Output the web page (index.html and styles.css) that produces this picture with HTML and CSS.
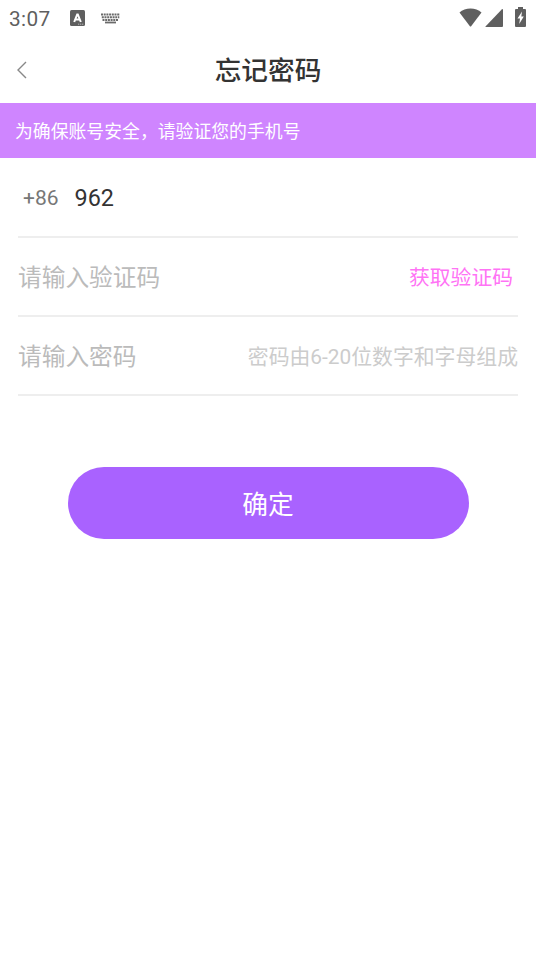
FILE: index.html
```html
<!DOCTYPE html>
<html lang="zh-CN">
<head>
<meta charset="utf-8">
<title>忘记密码</title>
<link rel="stylesheet" href="styles.css">
</head>
<body>
<div class="status">
  <span class="time">3:07</span>
  <svg class="ico-a" width="15" height="16" viewBox="0 0 15 16"><rect width="15" height="16" rx="1.500" fill="#5f5f5f"/><path d="M4.200 12 7.200 4.500h.6l3 7.500M5.500 9.500h4" fill="none" stroke="#fff" stroke-width="2"/><path d="M8 14.200h5.500" stroke="#ccc" stroke-width=".8" stroke-dasharray="1.300 .7"/></svg>
  <svg class="ico-kb" width="19" height="11" viewBox="0 0 19 11"><path d="M0 1.500h19M.8 4.200h17.500M1.500 6.900h16" stroke="#6a6a6a" stroke-width="2" stroke-dasharray="2 .7"/><path d="M4 9.500h11" stroke="#6a6a6a" stroke-width="1.800"/></svg>
  <span class="spacer"></span>
  <svg class="wifi" width="23" height="19" viewBox="0 0 23 19"><path d="M.5 4.500C6-.8 17-.8 22.500 4.500L12.300 18q-.8 1-1.600 0z" fill="#5f5f5f"/></svg>
  <svg class="signal" width="18" height="18" viewBox="0 0 18 18"><path d="M18 1v16q0 1-1 1H1q-1 0-.3-.8L16.700.5Q18-.5 18 1z" fill="#5f5f5f"/></svg>
  <svg class="battery" width="11" height="20" viewBox="0 0 11 20"><path d="M3 0h5v2h2q1 0 1 1v16q0 1-1 1H1q-1 0-1-1V3q0-1 1-1h2z" fill="#5f5f5f"/><path d="M7 4.500 2.500 11.500H5l-.8 5.500L8.800 9.500H6.300z" fill="#fff"/></svg>
</div>
<header class="nav">
  <svg class="back" width="10" height="18" viewBox="0 0 10 18"><path d="M9 1 1 9l8 8" fill="none" stroke="#888" stroke-width="1.400"/></svg>
  <h1>忘记密码</h1>
</header>
<div class="notice">为确保账号安全，请验证您的手机号</div>
<main class="form">
  <div class="row"><span class="code">+86</span><span class="phone">962</span></div>
  <div class="row"><span class="placeholder">请输入验证码</span><span class="get">获取验证码</span></div>
  <div class="row"><span class="placeholder">请输入密码</span><span class="hint">密码由6-20位数字和字母组成</span></div>
</main>
<button class="submit">确定</button>
</body>
</html>
```
FILE: styles.css
```css
* { box-sizing: border-box; }
body { margin: 0; background: #fff; font-family: Roboto, "Noto Sans CJK SC", sans-serif; color: #333; }
.status { height: 36px; display: flex; align-items: center; padding: 0 10px 0 9px; color: #5f5f5f; }
.time { font-size: 20.800px; letter-spacing: .4px; width: 61px; padding-top: 1px; }
.ico-kb { margin-left: 16px; }
.spacer { flex: 1; }
.wifi { margin-top: -2px; }
.signal { margin: 0 12px 0 3px; }
.battery { margin-top: -2px; }
.nav { height: 67px; display: flex; align-items: center; justify-content: center; position: relative; padding-top: 2px; }
.back { position: absolute; left: 17px; top: 25px; }
h1 { margin: 0; font-size: 26.700px; font-weight: 500; line-height: 40px; }
.notice { height: 55px; line-height: 55px; padding: 1px 0 0 15px; background: #cf85ff; color: #fff; font-size: 17.850px; }
.form { padding: 0 18px; }
.row { height: 79.500px; display: flex; align-items: center; border-bottom: 2px solid #eee; }
.row:last-child { height: 79px; }
.code { font-size: 21px; color: #777; margin-left: 5px; width: 51.500px; padding-top: 2px; }
.phone { font-size: 23.400px; padding-top: 2px; }
.placeholder { font-size: 23.700px; color: #bbb; padding-bottom: 1px; }
.get, .hint { margin-left: auto; font-size: 20.800px; }
.get { color: #ff73f5; margin-right: 5px; }
.hint { color: #ccc; font-size: 20.850px; padding-bottom: 1px; }
.submit { display: block; width: 401px; height: 72px; margin: 71px auto 0; padding: 0 0 2px; border: 0; border-radius: 36px; background: #a962ff; color: #fff; font: 25.700px Roboto, "Noto Sans CJK SC", sans-serif; }
```
